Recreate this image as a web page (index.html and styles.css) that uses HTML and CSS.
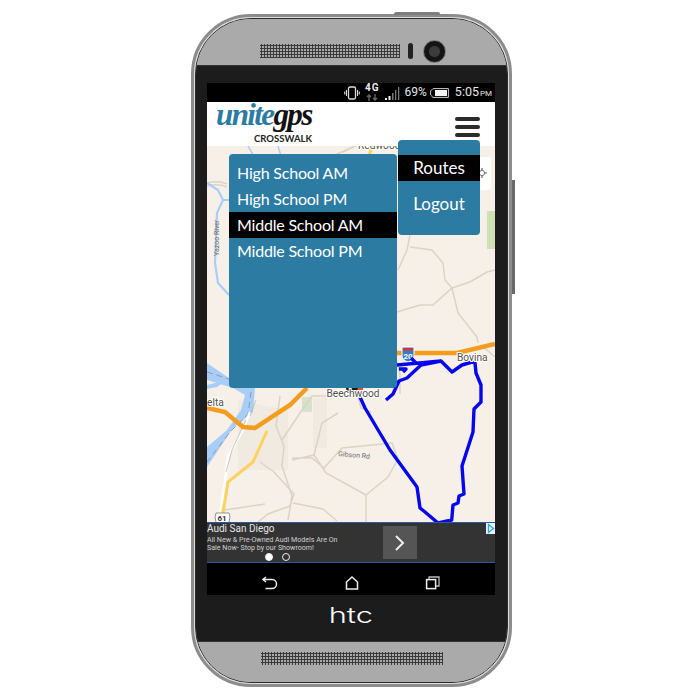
FILE: index.html
```html
<!DOCTYPE html>
<html lang="en">
<head>
<meta charset="utf-8">
<title>UniteGPS Crosswalk</title>
<link rel="stylesheet" href="styles.css">
</head>
<body>
<div class="stage">
  <div class="phone">
    <span class="btn-top"></span>
    <span class="btn-side"></span>
    <div class="shell">
      <div class="bezel-top">
        <span class="speaker"></span>
        <span class="slit"></span>
        <span class="camera"></span>
      </div>
      <div class="bezel-mid">
        <div class="screen">
          <div class="status">
            <svg class="st-vib" viewBox="0 0 16 14"><rect x="4.500" y="1" width="7" height="12" rx="1.500" fill="none" stroke="#ddd" stroke-width="1.300"/><path d="M2.500 4v6M0.700 5.500v3M13.500 4v6M15.300 5.500v3" stroke="#ddd" stroke-width="1.100"/></svg>
            <div class="st-net"><span class="st-4g">4G</span><svg viewBox="0 0 12 7"><path d="M3 7V1M1 3l2-2 2 2M9 0v6M7 4l2 2 2-2" stroke="#666" stroke-width="1.400" fill="none"/></svg></div>
            <svg class="st-sig" viewBox="0 0 16 14"><path d="M8 14V7h1.500v7zM11 14V4h1.300v10zM14 14V1h1.300v13z" fill="#777"/><path d="M1 14v-2h2v2zM4.500 14v-4h2v4z" fill="#eee"/></svg>
            <span class="st-pct">69%</span>
            <svg class="st-bat" viewBox="0 0 19 10"><path d="M3 .6h15.400v8.800H3L.6 7V3z" fill="none" stroke="#ccc" stroke-width="1"/><rect x="5" y="2" width="12" height="6" fill="#f2f2f2"/></svg>
            <span class="st-time">5:05<small>PM</small></span>
          </div>
          <header class="appbar">
            <div class="logo">
              <div class="logo-word"><span class="logo-unite">unite</span><span class="logo-gps">gps</span></div>
              <div class="logo-sub">CROSSWALK</div>
            </div>
            <div class="burger"><span></span><span></span><span></span></div>
          </header>
          <div class="map">
            <svg class="map-svg" viewBox="207 146 288 376">
              <rect x="207" y="146" width="288" height="376" fill="#f7f0e9"/>
              <rect x="487" y="211" width="8" height="38" fill="#cfe0b4"/>
              <path d="M313 398h14v50h-14zM238 400l50 10v60l-50 0z" fill="#f1eae1"/>
              <path d="M302 397h10v15h-10z" fill="#d5e3cb"/>
              <g fill="none" stroke="#dcd3c5" stroke-width="1.500">
                <path d="M410 235l-3 15-9 20"/>
                <path d="M410 247l22 3 11 13 2 17 7 8 6 25 19 24 1 6"/>
                <path d="M397 312l23-7h13l19-17 18-6 17-10 8-2"/>
                <path d="M207 183c8-2 13-2 20 1M207 186c8-2 13-2 20 1"/>
                <path d="M280 396l-4 30 8 20-2 20 10 30-4 24M282 440l20-30 10-14 46 0 3 12 10 4"/>
                <path d="M292 460l22-5 8-32 16-10M292 458l20 0 12 10 18-20 50-5 6 16-10 18-22 18 0 33"/>
                <path d="M314 455l12 18 40 22"/>
                <path d="M260 462l14 10 20 22-4 12-22 8-10 8M293 503l30 6 14 12M225 510l40-6"/>
                <path d="M392 344l8 30 0 20M481 345l14 12"/>
                <path d="M352 146l16-7M335 155l18-8M343 152l14-7"/>
              </g>
              <g fill="none" stroke="#a9cdf9">
                <path d="M207 183l11 7 5 10h6M223 200l-6 13-2 50 3 20 11 12" stroke-width="2.200"/>
                <path d="M248 146l8 14M278 146l3 10M395 146l8 8" stroke-width="1.500"/>
              </g>
              <path d="M207 363l22 15 26 10-2 24-20 16-26 39v-20l20-17 14-20 4-15-12-7-26-8zM207 385l20-5-10 7-10 2z" fill="#a9cdf9"/>
              <path d="M207 372l22 7M251 392l-3 22-18 18-23 30" fill="none" stroke="#8f9aa5" stroke-width="1" stroke-dasharray="6 4"/>
              <path d="M250 412l-8 20-14 24-3 26-5 30" fill="none" stroke="#fff" stroke-width="2.500"/>
              <path d="M246 420l-14 30-6 22M256 400l-6 16" fill="none" stroke="#bbb8b4" stroke-width=".8"/>
              <path d="M207 408l18 4 18 15 12 1 35-23 17-17M397 353h60l38-9" fill="none" stroke="#f49c1d" stroke-width="4.500"/>
              <path d="M267 431l-14 31-25 20-5 31" fill="none" stroke="#fcd25b" stroke-width="3"/>
              <path d="M372 146l-3 10" fill="none" stroke="#fcd25b" stroke-width="3"/>
              <path d="M402 347h12v8c0 4-3 6-6 7-3-1-6-3-6-7z" fill="#3a7cc4" stroke="#fff" stroke-width="1"/>
              <rect x="403" y="348" width="10" height="2.500" fill="#d33"/>
              <text class="m-shield" x="408" y="359">20</text>
              <path d="M216 513h13l1 4-2 10h-11l-2-10z" fill="#fff" stroke="#777" stroke-width=".8"/>
              <text class="m-shield m-dark" x="222" y="521">61</text>
              <rect x="465" y="157" width="26" height="33" rx="2" fill="#fff"/>
              <path d="M482 168v10M477 173h10" stroke="#8c8c8c" stroke-width="1.600"/>
              <circle cx="482" cy="173" r="2.600" fill="#fff" stroke="#777"/>
              <path d="M360 397l5 11 25 42 27 37 3 21 5 4 13 11M438 523l7-1.500 6.700-1.500 1.300-15 5-2 1-7 5-2-2-28 11-34 1-23 7-7v-17l-5-12-1-10-3-1-10 3-10 7-11-11-44 4M441 361l-20 4-14 13-8 3-6 13-7 6M411 358l5 5M399 369h7l-3 3" fill="none" stroke="#0606ee" stroke-width="3.400" stroke-linejoin="round"/>
              <circle cx="352" cy="388" r="6" fill="#161616"/>
              <rect x="358" y="387" width="5" height="6" fill="#e34a4a"/>
              <text class="m-place" x="353" y="397">Beechwood</text>
              <text class="m-place m-left" x="457" y="361">Bovina</text>
              <text class="m-place m-left" x="207" y="406">elta</text>
              <text class="m-place m-left" x="358" y="149">Redwood</text>
              <text class="m-small" transform="translate(338 456) rotate(5)">Gibson Rd</text>
              <text class="m-small" transform="translate(219 256) rotate(-90)">Yazoo River</text>
            </svg>
          </div>
          <aside class="ad">
            <div class="ad-copy">
              <div class="ad-title">Audi San Diego</div>
              <div class="ad-desc">All New &amp; Pre-Owned Audi Models Are On<br>Sale Now- Stop by our Showroom!</div>
              <div class="ad-dots"><span class="dot on"></span><span class="dot"></span></div>
            </div>
            <div class="ad-go"><svg viewBox="0 0 12 18"><path d="M2 2l7 7-7 7" fill="none" stroke="#eee" stroke-width="2"/></svg></div>
            <svg class="ad-choice" viewBox="0 0 9 11"><rect width="9" height="11" fill="#e8f2f6"/><path d="M2.500 1.500v8l5-4z" fill="none" stroke="#2ca7d8" stroke-width="1.300"/></svg>
          </aside>
          <nav class="navbar">
            <svg viewBox="0 0 16 14"><path d="M4 1L1 3.500 4 6M1.500 3.500H10a4 4 0 0 1 0 9H3.500" fill="none" stroke="#eee" stroke-width="1.500"/></svg>
            <svg viewBox="0 0 16 14"><path d="M8 1l5.500 5v7h-11V6z" fill="none" stroke="#eee" stroke-width="1.500"/></svg>
            <svg viewBox="0 0 16 14"><path d="M4 3V1h10v9h-3" fill="none" stroke="#bbb" stroke-width="1.300"/><rect x="1.600" y="3.600" width="9" height="9" fill="none" stroke="#eee" stroke-width="1.500"/></svg>
          </nav>
          <div class="panel routes">
            <div class="route">High School AM</div>
            <div class="route">High School PM</div>
            <div class="route active">Middle School AM</div>
            <div class="route">Middle School PM</div>
          </div>
          <div class="panel menu">
            <div class="menu-item active">Routes</div>
            <div class="menu-item">Logout</div>
          </div>
        </div>
        <div class="brand">htc</div>
      </div>
      <div class="bezel-bottom"><span class="speaker wide"></span></div>
    </div>
  </div>
</div>
</body>
</html>
```
FILE: styles.css
```css
* { box-sizing: border-box; }
html, body { margin: 0; padding: 0; background: #fff; }
.stage { width: 700px; height: 700px; padding: 14px 188px 13px 191px; }
.phone {
  position: relative;
  height: 673px;
  border: 3px solid #8c8c8c;
  border-radius: 60px;
  padding: 1px;
  background: #dcdcdc;
}
.btn-top { position: absolute; left: 200px; top: -5px; width: 46px; height: 3px; background: #7d7d7d; border-radius: 2px 2px 0 0; }
.btn-side { position: absolute; right: -6px; top: 163px; width: 3px; height: 114px; background: #6a6a6a; }
.shell {
  height: 100%;
  border: 1px solid #2a2a2a;
  border-radius: 56px;
  overflow: hidden;
  display: flex;
  flex-direction: column;
  background: #aaa;
}
.bezel-top {
  height: 47px;
  flex: none;
  padding: 18px 0 0 64px;
  display: flex;
  align-items: center;
  background: #aaa;
  border-bottom: 1px solid #333;
}
.speaker {
  display: block;
  width: 140px;
  height: 14px;
  background: radial-gradient(circle, #3a3a3a 1px, transparent 1.3px) 0 0 / 3px 3px;
}
.speaker.wide { width: 182px; height: 13px; }
.slit { width: 5px; height: 16px; margin-left: 8px; border-radius: 3px; background: #222; }
.camera {
  width: 23px;
  height: 23px;
  margin-left: 10px;
  border-radius: 50%;
  background: radial-gradient(circle, #3c3c3c 0 5px, #141414 6px);
  border: 1px solid #777;
}
.bezel-mid {
  height: 575px;
  flex: none;
  padding: 17px 12px 0 11px;
  background: #1c1c1c;
  display: flex;
  flex-direction: column;
  align-items: center;
}
.bezel-bottom {
  flex: 1;
  display: flex;
  justify-content: center;
  padding-top: 10px;
  background: #aaa;
  border-top: 1px solid #333;
}
.brand {
  margin-top: 9px;
  font: 300 22px/22px "Inter", sans-serif;
  color: #fff;
  transform: scaleX(1.4);
}
.screen { position: relative; width: 288px; height: 512px; display: flex; flex-direction: column; background: #000; }

.status {
  height: 19px;
  flex: none;
  display: flex;
  align-items: center;
  padding: 0 3px 0 137px;
  background: #000;
  color: #e4e4e4;
  font: 12px/19px "Roboto", sans-serif;
  overflow: hidden;
}
.status svg { display: block; flex: none; }
.st-vib { width: 16px; height: 14px; }
.st-net { width: 18px; margin-left: 4px; display: flex; flex-direction: column; align-items: center; height: 19px; }
.st-4g { font: 700 10px/9px "Roboto", sans-serif; letter-spacing: 1px; color: #eee; }
.st-net svg { width: 12px; height: 7px; margin-top: 2px; }
.st-sig { width: 16px; height: 14px; margin-left: 3px; }
.st-pct { margin-left: 5px; width: 23px; }
.st-bat { width: 19px; height: 10px; margin-left: 3px; }
.st-time { margin-left: 6px; white-space: nowrap; font-size: 12.500px; }
.st-time small { font-size: 8px; margin-left: 1px; }

.appbar {
  height: 44px;
  flex: none;
  display: flex;
  justify-content: space-between;
  background: #fff;
  padding: 0 15px 0 9px;
}
.logo { width: 96px; }
.logo-word { font: italic 700 31px/25px "Liberation Serif", serif; letter-spacing: -1.600px; white-space: nowrap; }
.logo-unite { color: #2c7ba3; }
.logo-gps { color: #111; }
.logo-sub { font: 700 9.500px/9px "Lato", sans-serif; color: #222; text-align: right; margin-top: 7px; }
.burger { display: flex; flex-direction: column; gap: 4px; padding-top: 15px; }
.burger span { display: block; width: 25px; height: 4px; border-radius: 2px; background: #2b2b2b; }

.map { height: 376px; flex: none; overflow: hidden; }
.map-svg { display: block; width: 288px; height: 376px; }
.m-place { font: 10.200px "Roboto", sans-serif; fill: #55514b; stroke: #fff; stroke-width: 2px; paint-order: stroke; text-anchor: middle; }
.m-left { text-anchor: start; }
.m-small { font: 7px "Roboto", sans-serif; fill: #6b6b6b; }
.m-shield { font: 700 8px "Roboto", sans-serif; fill: #fff; text-anchor: middle; }
.m-dark { fill: #333; }

.ad {
  height: 41px;
  flex: none;
  display: flex;
  background: #333;
  border-top: 1px solid #2a5aa8;
  border-bottom: 1px solid #2a5aa8;
  color: #e6e6e6;
  font-family: "Roboto", sans-serif;
  position: relative;
}
.ad-copy { width: 176px; padding-right: 36px; display: flex; flex-direction: column; }
.ad-title { font-size: 10px; line-height: 11px; white-space: nowrap; }
.ad-desc { font-size: 7.100px; line-height: 7.500px; margin-top: 2px; white-space: nowrap; color: #cfcfcf; }
.ad-dots { display: flex; justify-content: center; gap: 9px; margin-top: 2px; }
.dot { width: 8px; height: 8px; border-radius: 50%; border: 1px solid #eee; }
.dot.on { background: #fff; }
.ad-go { width: 34px; height: 33px; margin-top: 3px; background: #555; display: flex; align-items: center; justify-content: center; }
.ad-go svg { width: 12px; height: 18px; }
.ad-choice { position: absolute; right: 0; top: 0; width: 9px; height: 11px; }

.navbar { flex: 1; display: flex; background: #000; padding: 8px 54px 0 55px; justify-content: space-between; align-items: center; }
.navbar svg { width: 16px; height: 14px; display: block; }

.panel { position: absolute; background: #2c7ba3; border-radius: 4px; color: #fff; font: 17px/25px "Lato", sans-serif; }
.routes { left: 22px; top: 71px; width: 168px; height: 234px; padding-top: 6px; font-size: 16px; letter-spacing: -.2px; }
.route { height: 26px; padding-left: 8px; white-space: nowrap; }
.menu { left: 191px; top: 57px; width: 82px; height: 95px; padding-top: 15px; }
.menu-item { height: 26px; text-align: center; }
.menu-item + .menu-item { margin-top: 10px; }
.active { background: #000; }
```
